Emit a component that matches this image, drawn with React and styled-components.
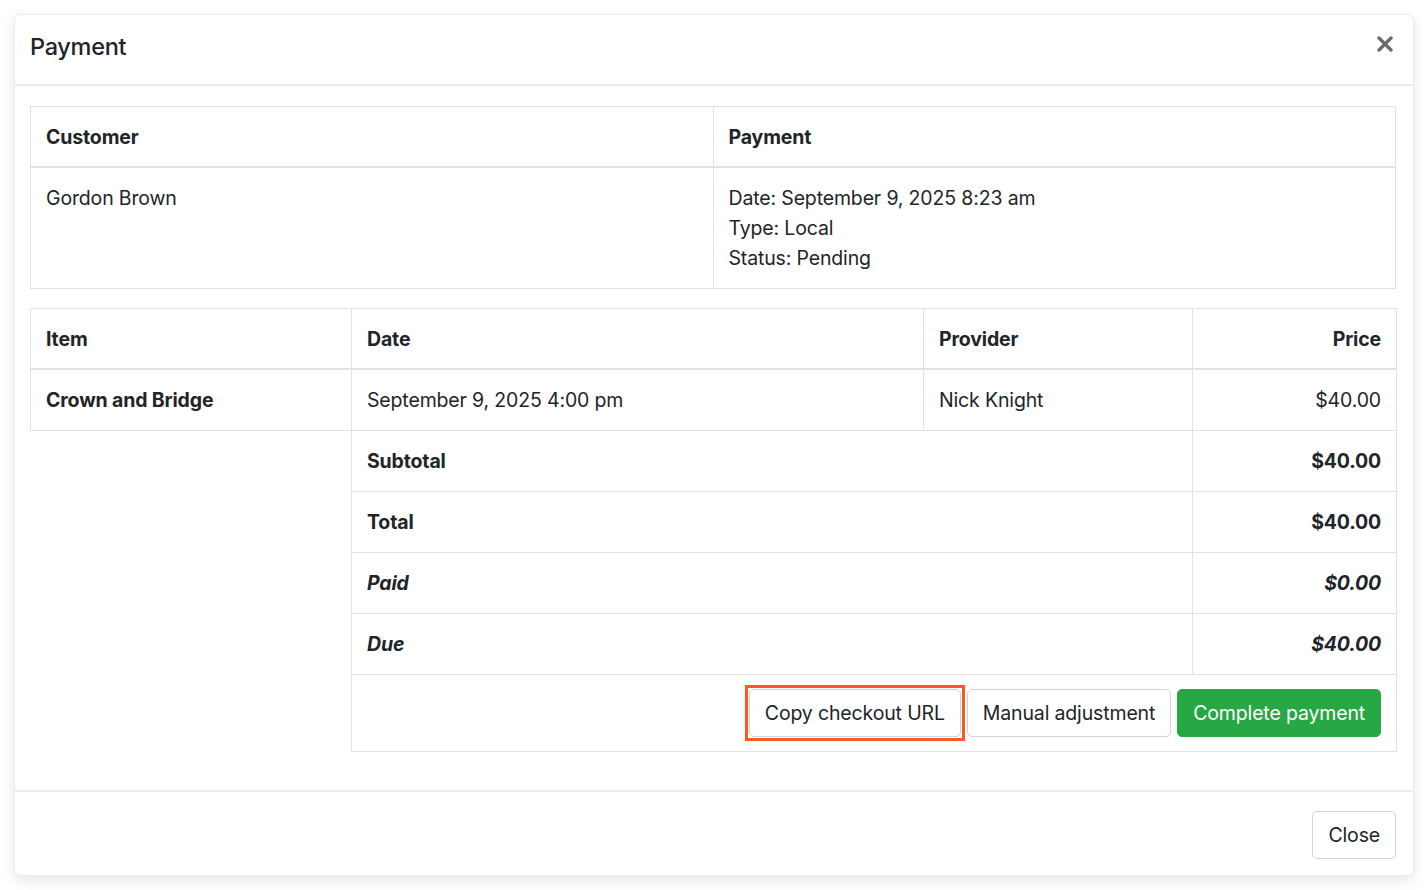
import styled, { createGlobalStyle } from 'styled-components';

const GlobalStyle = createGlobalStyle`
  html, body {
    margin: 0;
    padding: 0;
    background: #fff;
  }
  body {
    font-family: Inter, "Noto Sans", "Liberation Sans", sans-serif;
    color: #212529;
  }
`;

const Page = styled.div`
  padding: 14px;
  width: 1428px;
  box-sizing: border-box;
`;

const Modal = styled.div`
  width: 1400px;
  background: #fff;
  border: 1px solid #e9ecef;
  border-radius: 6px;
  box-shadow: 0 4px 14px rgba(0, 0, 0, 0.1);
  box-sizing: border-box;
`;

const Header = styled.div`
  display: flex;
  align-items: center;
  justify-content: space-between;
  height: 71px;
  padding: 0 17px 0 15px;
  border-bottom: 2px solid #e9ecef;
  box-sizing: border-box;
`;

const Title = styled.h5`
  margin: 0 0 6px;
  font-size: 23.5px;
  font-weight: 500;
  color: #212529;
  letter-spacing: -0.3px;
`;

const CloseX = styled.button`
  border: none;
  background: none;
  padding: 0;
  width: 22px;
  height: 22px;
  display: flex;
  align-items: center;
  justify-content: center;
  cursor: pointer;
  margin-top: -12px;
`;

const Body = styled.div`
  padding: 20px 17px 38px 15px;
`;

const Table = styled.table`
  width: 100%;
  border-collapse: collapse;
  table-layout: fixed;
  font-size: 19.5px;
  letter-spacing: -0.15px;
  line-height: 30px;
  margin-bottom: ${(p) => (p.$last ? '0' : '19px')};
`;

const Th = styled.th`
  text-align: ${(p) => (p.$right ? 'right' : 'left')};
  font-weight: 700;
  padding: 15px 15px 14px 15px;
  border: 1px solid #dee2e6;
  border-bottom: 2px solid #dee2e6;
  vertical-align: top;
`;

const Td = styled.td`
  text-align: ${(p) => (p.$right ? 'right' : 'left')};
  font-weight: ${(p) => (p.$bold ? 700 : 400)};
  font-style: ${(p) => (p.$italic ? 'italic' : 'normal')};
  padding: 15px;
  border: 1px solid #dee2e6;
  vertical-align: top;
`;

const Blank = styled.td`
  border: none;
  padding: 0;
`;

const ActionCell = styled.td`
  padding: 14px 15px;
  border: 1px solid #dee2e6;
`;

const Actions = styled.div`
  display: flex;
  justify-content: flex-end;
  gap: 6px;
`;

const Button = styled.button`
  position: relative;
  font-family: inherit;
  font-size: 19.5px;
  letter-spacing: -0.15px;
  line-height: 30px;
  padding: 8px 15px;
  border-radius: 5px;
  cursor: pointer;
  color: ${(p) => (p.$success ? '#fff' : '#212529')};
  background: ${(p) => (p.$success ? '#28a745' : '#fff')};
  border: 1px solid ${(p) => (p.$success ? '#28a745' : '#ced4da')};
  outline: none;

  &::after {
    content: '';
    display: ${(p) => (p.$focused ? 'block' : 'none')};
    position: absolute;
    inset: -5px;
    border: 3px solid #fb5a1e;
    pointer-events: none;
  }
`;

const Footer = styled.div`
  display: flex;
  justify-content: flex-end;
  padding: 19px 17px 16px 16px;
  border-top: 2px solid #e9ecef;
`;

const Line = styled.div``;

export default function App() {
  return (
    <>
      <GlobalStyle />
      <Page>
        <Modal>
          <Header>
            <Title>Payment</Title>
            <CloseX aria-label="Close">
              <svg width="16" height="16" viewBox="0 0 16 16">
                <path d="M2 2 L14 14 M14 2 L2 14" stroke="#6c6c6c" strokeWidth="3.4" strokeLinecap="round" />
              </svg>
            </CloseX>
          </Header>
          <Body>
            <Table>
              <colgroup>
                <col style={{ width: '50%' }} />
                <col style={{ width: '50%' }} />
              </colgroup>
              <thead>
                <tr>
                  <Th>Customer</Th>
                  <Th>Payment</Th>
                </tr>
              </thead>
              <tbody>
                <tr>
                  <Td>Gordon Brown</Td>
                  <Td>
                    <Line>Date: September 9, 2025 8:23 am</Line>
                    <Line>Type: Local</Line>
                    <Line>Status: Pending</Line>
                  </Td>
                </tr>
              </tbody>
            </Table>
            <Table $last>
              <colgroup>
                <col style={{ width: '321px' }} />
                <col style={{ width: '572px' }} />
                <col style={{ width: '269px' }} />
                <col style={{ width: '204px' }} />
              </colgroup>
              <thead>
                <tr>
                  <Th>Item</Th>
                  <Th>Date</Th>
                  <Th>Provider</Th>
                  <Th $right>Price</Th>
                </tr>
              </thead>
              <tbody>
                <tr>
                  <Td $bold>Crown and Bridge</Td>
                  <Td>September 9, 2025 4:00 pm</Td>
                  <Td>Nick Knight</Td>
                  <Td $right>$40.00</Td>
                </tr>
                <tr>
                  <Blank rowSpan={5} />
                  <Td colSpan={2} $bold>Subtotal</Td>
                  <Td $right $bold>$40.00</Td>
                </tr>
                <tr>
                  <Td colSpan={2} $bold>Total</Td>
                  <Td $right $bold>$40.00</Td>
                </tr>
                <tr>
                  <Td colSpan={2} $bold $italic>Paid</Td>
                  <Td $right $bold $italic>$0.00</Td>
                </tr>
                <tr>
                  <Td colSpan={2} $bold $italic>Due</Td>
                  <Td $right $bold $italic>$40.00</Td>
                </tr>
                <tr>
                  <ActionCell colSpan={3}>
                    <Actions>
                      <Button $focused>Copy checkout URL</Button>
                      <Button>Manual adjustment</Button>
                      <Button $success>Complete payment</Button>
                    </Actions>
                  </ActionCell>
                </tr>
              </tbody>
            </Table>
          </Body>
          <Footer>
            <Button>Close</Button>
          </Footer>
        </Modal>
      </Page>
    </>
  );
}
